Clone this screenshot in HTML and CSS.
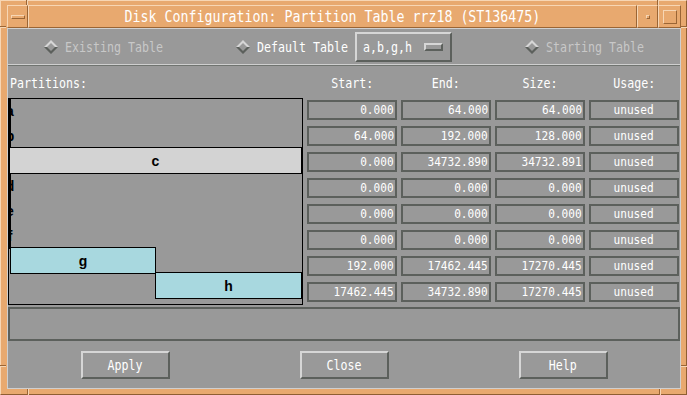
FILE: index.html
```html
<!DOCTYPE html>
<html lang="en">
<head>
  <meta charset="UTF-8" />
  <title>Disk Configuration: Partition Table rrz18 (ST136475)</title>
  <link rel="stylesheet" href="styles.css">
</head>
<body>

<div class="window">
  <!-- resize handle marks in the frame -->
  <span class="mark v" style="left:25px;top:-1px;height:5px"></span>
  <span class="mark v" style="left:656px;top:-1px;height:5px"></span>
  <span class="mark h" style="left:-1px;top:25px;width:6px"></span>
  <span class="mark h" style="left:680px;top:25px;width:6px"></span>
  <span class="mark v" style="left:26px;top:388px;height:6px"></span>
  <span class="mark v" style="left:658px;top:388px;height:6px"></span>
  <span class="mark h" style="left:-1px;top:364px;width:6px"></span>
  <span class="mark h" style="left:680px;top:364px;width:6px"></span>

  <header class="titlebar">
    <div class="tb-seg tb-menu"><span class="bevel ico-menu"></span></div>
    <div class="tb-seg tb-title"><span>Disk Configuration: Partition Table rrz18 (ST136475)</span></div>
    <div class="tb-seg tb-min"><span class="bevel ico-min"></span></div>
    <div class="tb-seg tb-max"><span class="bevel ico-max"></span></div>
  </header>

  <main class="content">
    <div class="radio-row">
      <div class="radio off">
        <svg class="diamond" viewBox="0 0 14 14"><path class="hi" d="M0 7 7 0 14 7h-3L7 3 3 7z"/><path class="lo" d="M0 7 7 14 14 7h-3L7 11 3 7z"/></svg>
        <div class="c w98"><span>Existing Table</span></div>
      </div>
      <div class="radio">
        <svg class="diamond" viewBox="0 0 14 14"><path class="hi" d="M0 7 7 0 14 7h-3L7 3 3 7z"/><path class="lo" d="M0 7 7 14 14 7h-3L7 11 3 7z"/></svg>
        <div class="c w91"><span>Default Table</span></div>
        <div class="option">
          <div class="c w49"><span>a,b,g,h</span></div>
          <span class="opt-ind"></span>
        </div>
      </div>
      <div class="radio off">
        <svg class="diamond" viewBox="0 0 14 14"><path class="hi" d="M0 7 7 0 14 7h-3L7 3 3 7z"/><path class="lo" d="M0 7 7 14 14 7h-3L7 11 3 7z"/></svg>
        <div class="c w98"><span>Starting Table</span></div>
      </div>
    </div>

    <div class="parts-head">
      <div class="c first"><span>Partitions:</span></div>
      <div class="c mid"><span>Start:</span></div>
      <div class="c mid"><span>End:</span></div>
      <div class="c mid"><span>Size:</span></div>
      <div class="c mid"><span>Usage:</span></div>
    </div>

    <div class="parts-body">
      <div class="canvas">
        <div class="bar grey tiny" style="left:0;top:-2px">a</div>
        <div class="bar grey tiny" style="left:0;top:23px">b</div>
        <div class="bar grey tiny" style="left:0;top:73px">d</div>
        <div class="bar grey tiny" style="left:0;top:98px">e</div>
        <div class="bar grey tiny" style="left:0;top:123px">f</div>
        <div class="bar grey" style="left:0;top:48px;width:293px">c</div>
        <div class="bar blue" style="left:1px;top:148px;width:146px">g</div>
        <div class="bar blue" style="left:146px;top:173px;width:147px">h</div>
      </div>

      <div class="fields">
        <div class="field c end"><span>0.000</span></div>
        <div class="field c end"><span>64.000</span></div>
        <div class="field c end"><span>64.000</span></div>
        <div class="field c mid"><span>unused</span></div>

        <div class="field c end"><span>64.000</span></div>
        <div class="field c end"><span>192.000</span></div>
        <div class="field c end"><span>128.000</span></div>
        <div class="field c mid"><span>unused</span></div>

        <div class="field c end"><span>0.000</span></div>
        <div class="field c end"><span>34732.890</span></div>
        <div class="field c end"><span>34732.891</span></div>
        <div class="field c mid"><span>unused</span></div>

        <div class="field c end"><span>0.000</span></div>
        <div class="field c end"><span>0.000</span></div>
        <div class="field c end"><span>0.000</span></div>
        <div class="field c mid"><span>unused</span></div>

        <div class="field c end"><span>0.000</span></div>
        <div class="field c end"><span>0.000</span></div>
        <div class="field c end"><span>0.000</span></div>
        <div class="field c mid"><span>unused</span></div>

        <div class="field c end"><span>0.000</span></div>
        <div class="field c end"><span>0.000</span></div>
        <div class="field c end"><span>0.000</span></div>
        <div class="field c mid"><span>unused</span></div>

        <div class="field c end"><span>192.000</span></div>
        <div class="field c end"><span>17462.445</span></div>
        <div class="field c end"><span>17270.445</span></div>
        <div class="field c mid"><span>unused</span></div>

        <div class="field c end"><span>17462.445</span></div>
        <div class="field c end"><span>34732.890</span></div>
        <div class="field c end"><span>17270.445</span></div>
        <div class="field c mid"><span>unused</span></div>
      </div>
    </div>

    <div class="message"></div>

    <div class="buttons">
      <button class="btn c mid"><span>Apply</span></button>
      <button class="btn c mid"><span>Close</span></button>
      <button class="btn c mid"><span>Help</span></button>
    </div>
  </main>
</div>

</body>
</html>
```

FILE: styles.css
```css
body {
  margin: 0;
  background: #999999;
}
.window {
  position: relative;
  width: 687px;
  height: 395px;
  box-sizing: border-box;
  background: #e8a96f;
  border: 1px solid;
  border-color: #f7d6b4 #8e5e32 #8e5e32 #f7d6b4;
  padding: 4px 5px 5px 6px;
  display: flex;
  flex-direction: column;
}
.mark {
  position: absolute;
  background: #9a6535;
}
.mark.v {
  width: 1px;
  box-shadow: 1px 0 0 #f7d6b4;
}
.mark.h {
  height: 1px;
  box-shadow: 0 1px 0 #f7d6b4;
}

/* title bar */
.titlebar {
  display: flex;
  height: 23px;
}
.tb-seg {
  box-sizing: border-box;
  border: 1px solid;
  border-color: #f7d6b4 #9a6535 #9a6535 #f7d6b4;
  display: flex;
  align-items: center;
  justify-content: center;
}
.tb-menu { width: 21px; }
.tb-title { flex: 1; overflow: hidden; }
.tb-min { width: 21px; }
.tb-max { width: 23px; }
.tb-title span {
  flex-shrink: 0;
  font: 16px/21px "DejaVu Sans Mono", monospace;
  color: #ffffff;
  white-space: nowrap;
  transform: scaleX(.83);
}
.bevel {
  box-sizing: border-box;
  border: 1px solid;
  border-color: #f7d6b4 #9a6535 #9a6535 #f7d6b4;
}
.ico-menu { width: 14px; height: 4px; }
.ico-min { width: 4px; height: 4px; }
.ico-max { width: 14px; height: 14px; }

/* dialog body */
.content {
  flex: 1;
  box-sizing: border-box;
  background: #999999;
  border: 1px solid #cfcfcf;
  display: flex;
  flex-direction: column;
  font-family: "DejaVu Sans Mono", monospace;
  font-size: 14px;
  color: #ffffff;
}

/* condensed text: the old X font is narrower than anything installed */
.c {
  display: flex;
  align-items: center;
  white-space: nowrap;
  line-height: 16px;
}
.c > span {
  flex-shrink: 0;
  transform: scaleX(.83);
  transform-origin: left center;
}
.c.mid { justify-content: center; }
.c.mid > span { transform-origin: center; }
.c.end { justify-content: flex-end; }
.c.end > span { transform-origin: right center; }
.w98 { width: 98px; }
.w91 { width: 91px; }
.w49 { width: 49px; }

.radio-row {
  height: 36px;
  box-sizing: border-box;
  border-bottom: 1px solid #cfcfcf;
  box-shadow: 0 1px 0 #707470;
  display: flex;
  justify-content: space-around;
  align-items: center;
}
.radio {
  display: flex;
  align-items: center;
  gap: 7px;
}
.radio.off { color: #c8c8c8; }
.diamond {
  width: 14px;
  height: 14px;
  flex-shrink: 0;
}
.diamond .hi { fill: #d6d6d6; }
.diamond .lo { fill: #5c605c; }

.option {
  box-sizing: border-box;
  width: 97px;
  height: 30px;
  border: 2px solid;
  border-color: #d6d6d6 #5c605c #5c605c #d6d6d6;
  display: flex;
  align-items: center;
  justify-content: space-between;
  padding: 0 7px 0 6px;
  color: #ffffff;
}
.opt-ind {
  width: 19px;
  height: 8px;
  box-sizing: border-box;
  border: 2px solid;
  border-color: #d6d6d6 #5c605c #5c605c #d6d6d6;
}

/* partition table */
.parts-head {
  display: grid;
  grid-template-columns: 295px repeat(4, 90px);
  column-gap: 4px;
  padding: 10px 0 7px;
}
.parts-head .first { padding-left: 2px; }

.parts-body {
  display: flex;
  gap: 4px;
  height: 207px;
}
.canvas {
  position: relative;
  width: 295px;
  height: 207px;
  box-sizing: border-box;
  border: 1px solid #000000;
  overflow: hidden;
}
.bar {
  position: absolute;
  height: 27px;
  box-sizing: border-box;
  border: 1px solid #000000;
  display: flex;
  align-items: center;
  justify-content: center;
  font: bold 14px "Liberation Sans", Arial, sans-serif;
  color: #000000;
}
.bar.tiny { width: 2px; }
.bar.grey { background: #d3d3d3; }
.bar.blue { background: #a8d8df; }

.fields {
  display: grid;
  grid-template-columns: repeat(4, 90px);
  grid-auto-rows: 20px;
  gap: 6px 4px;
  padding-top: 2px;
  align-content: start;
}
.field {
  box-sizing: border-box;
  border: 2px solid #5c605c;
  padding-right: 1px;
  font-size: 12.5px;
}
.field > span { transform: scaleX(.89); }

.message {
  height: 34px;
  box-sizing: border-box;
  border: 2px solid #5c605c;
  margin-top: 2px;
}

.buttons {
  display: flex;
  justify-content: center;
  gap: 130px;
  margin-top: 10px;
}
.btn {
  width: 89px;
  height: 28px;
  box-sizing: border-box;
  padding: 0;
  background: none;
  border: 2px solid;
  border-color: #d6d6d6 #5c605c #5c605c #d6d6d6;
  font: inherit;
  color: #ffffff;
}
```
